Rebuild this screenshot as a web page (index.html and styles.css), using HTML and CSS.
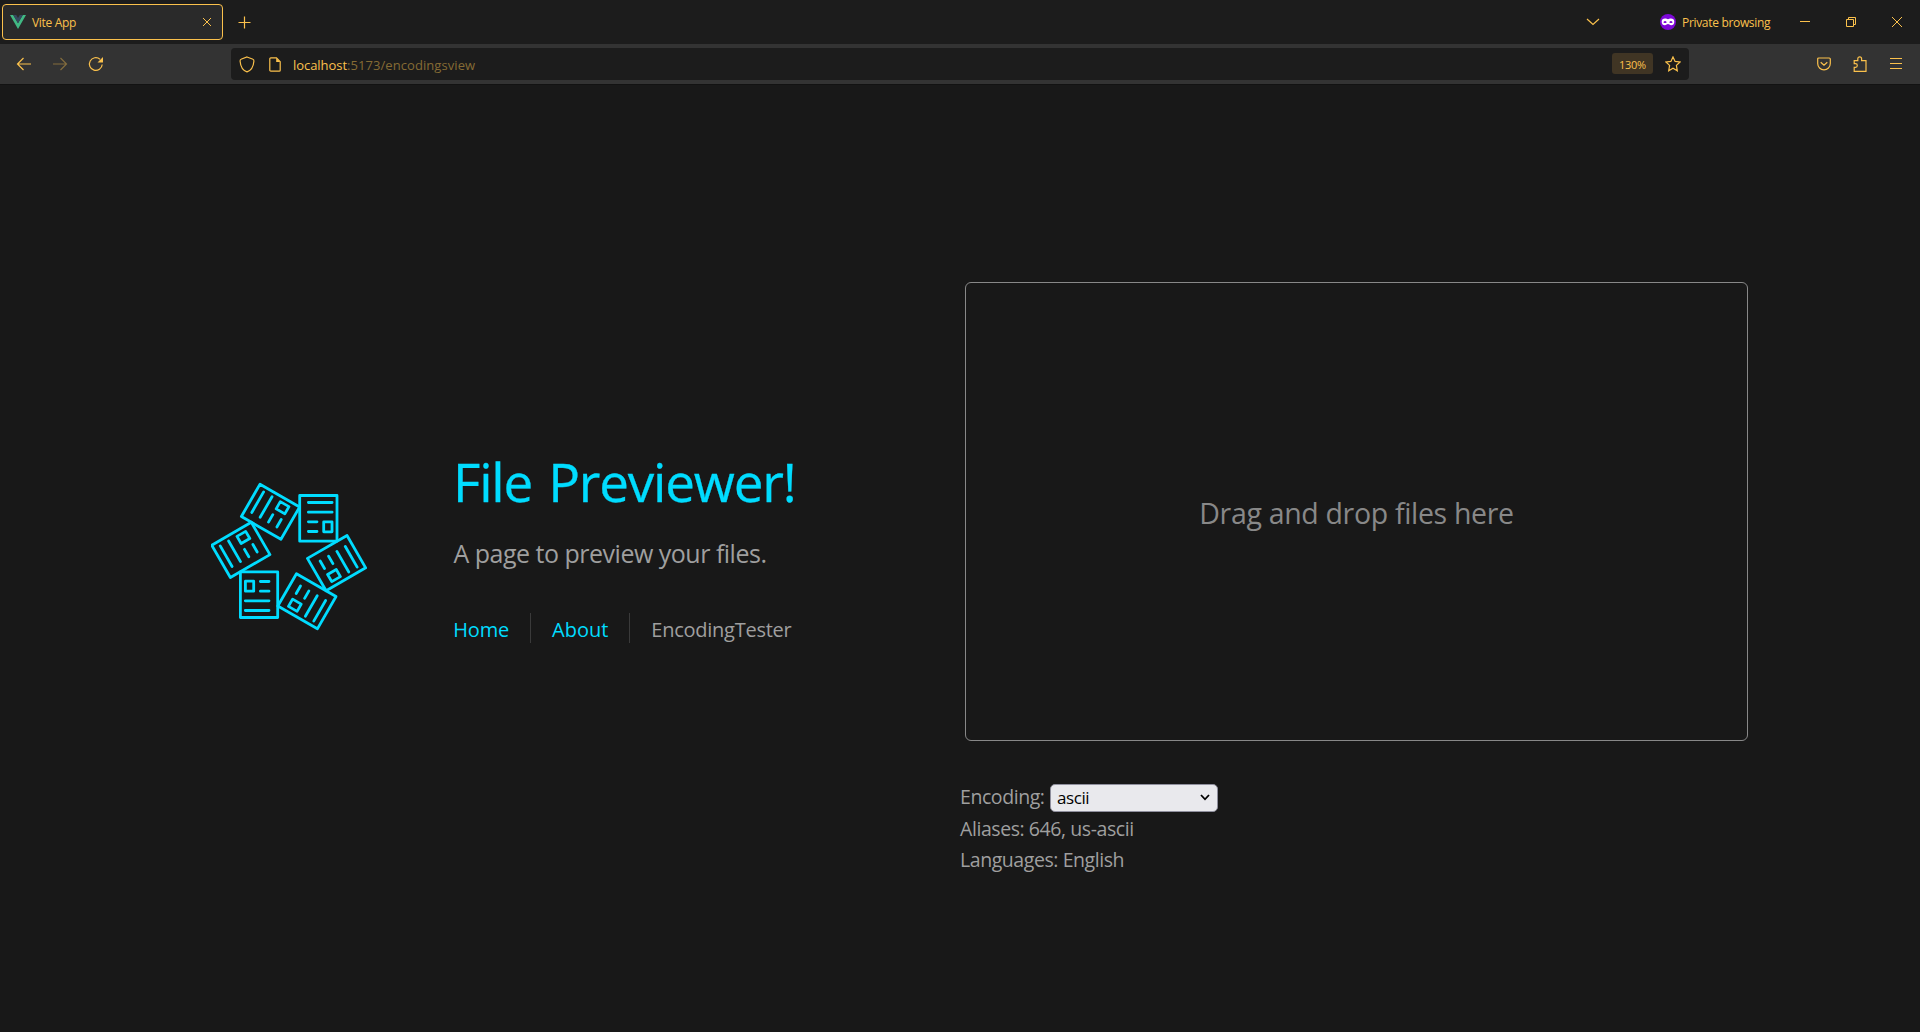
FILE: index.html
```html
<!DOCTYPE html>
<html lang="en">
<head>
<meta charset="utf-8">
<title>Vite App</title>
<link rel="stylesheet" href="styles.css">
</head>
<body>
<header class="tabbar">
  <div class="tab">
    <svg class="favicon" width="16" height="14" viewBox="0 0 16 14"><path fill="#41b883" d="M0 0h3.2L8 8.300 12.800 0H16L8 14z"/><path fill="#35495e" d="M3.200 0H6.200L8 3.100 9.800 0h3L8 8.300z"/></svg>
    <span class="tab-title">Vite App</span>
    <svg class="tab-close" width="10" height="10" viewBox="0 0 10 10"><path d="M1 1l8 8M9 1L1 9"/></svg>
  </div>
  <svg class="new-tab" width="13" height="13" viewBox="0 0 13 13"><path d="M6.500 .5v12M.5 6.500h12"/></svg>
  <div class="window-tools">
    <svg class="list-tabs" width="14" height="8" viewBox="0 0 14 8"><path d="M1 1l6 5.500L13 1"/></svg>
    <svg class="mask" width="16" height="16" viewBox="0 0 16 16"><circle cx="8" cy="8" r="8" fill="#7d08d8" stroke="none"/><path fill="#fff" stroke="none" d="M5 4.500C6.500 4.500 7 5.200 8 5.200S9.500 4.500 11 4.500c2 0 3.300 1 3.300 3.200 0 2.300-1.400 3.600-3.100 3.600-1.600 0-2.100-1.200-3.200-1.200s-1.600 1.200-3.200 1.200c-1.700 0-3.100-1.300-3.100-3.600C1.700 5.500 3 4.500 5 4.500z"/><path fill="#7d08d8" stroke="none" d="M3.300 8.200q1.800-2.400 3.500 0-1.800 1.800-3.500 0zM9.200 8.200q1.700-2.400 3.500 0-1.700 1.800-3.500 0z"/></svg>
    <span class="private">Private browsing</span>
    <svg class="minimize" width="10" height="10" viewBox="0 0 10 10"><path d="M0 4.500h10"/></svg>
    <svg class="restore" width="10" height="10" viewBox="0 0 10 10"><path d="M.5 2.500h7v7h-7zM2.500 2.500v-2h7v7h-2"/></svg>
    <svg class="close" width="10" height="10" viewBox="0 0 10 10"><path d="M0 0l10 10M10 0L0 10"/></svg>
  </div>
</header>
<nav class="toolbar">
  <svg class="back" width="16" height="14" viewBox="0 0 16 14"><path d="M15 7H1.500M7.500 1l-6 6 6 6"/></svg>
  <svg class="forward" width="16" height="14" viewBox="0 0 16 14"><path d="M1 7h13.500M8.500 1l6 6-6 6"/></svg>
  <svg class="reload" width="16" height="16" viewBox="0 0 16 16"><path d="M14.200 8.500A6.400 6.400 0 1 1 12 3.200"/><path class="solid" d="M15 1v5.500H9.500z"/></svg>
  <div class="urlbar">
    <svg class="shield" width="16" height="17" viewBox="0 0 16 17"><path d="M8 1l6 2.200c.9.300 1 .9.900 2C14.500 10 12 14.500 8 15.900 4 14.500 1.500 10 1.100 5.200 1 4.100 1.100 3.500 2 3.200z"/></svg>
    <svg class="doc" width="12" height="15" viewBox="0 0 12 15"><path d="M2 .8h5.500l3.700 4v8.400a1 1 0 0 1-1 1H1.800a1 1 0 0 1-1-1V1.800a1 1 0 0 1 1-1z"/><path class="solid" d="M7.200 1v4h4z"/></svg>
    <span class="url"><span class="host">localhost</span>:5173/encodingsview</span>
    <span class="zoom">130%</span>
    <svg class="star" width="16" height="16" viewBox="0 0 16 16"><path d="M8 .9l2.100 4.500 4.900.6-3.600 3.400.9 5.400L8 12.300l-4.300 2.500.9-5.400L1 6l4.900-.6z"/></svg>
  </div>
  <svg class="pocket" width="14" height="14" viewBox="0 0 14 14"><path d="M1.700 1h10.600q1 0 1 1v4.500a6.300 6.300 0 0 1-12.600 0V2q0-1 1-1zM3.700 5.200L7 8.300l3.300-3.100"/></svg>
  <svg class="puzzle" width="14" height="16" viewBox="0 0 14 16"><path d="M1.200 15.300v-4h1.300a1.800 1.800 0 0 0 0-3.600H1.200V4.600h3.600V2.700a1.900 1.900 0 0 1 3.800 0v1.900H13v10.700z"/></svg>
  <svg class="menu" width="12" height="11" viewBox="0 0 12 11"><path d="M0 .5h12M0 5.500h12M0 10.500h12"/></svg>
</nav>
<main class="page">
  <section class="intro">
    <svg class="logo" width="156" height="150" viewBox="-77.700 -75.500 156 150">
      <defs><g id="sheet"><path d="M-48.300 15.300h37.300V61h-37.300zM-43.300 24.700h8.300v10h-8.300zM-28.300 25h8.600M-28.300 34.700h8.600M-43.400 44.300h23.700M-43.400 54h23.700"/></g></defs>
      <use href="#sheet"/>
      <use href="#sheet" transform="rotate(60)"/>
      <use href="#sheet" transform="rotate(120)"/>
      <use href="#sheet" transform="rotate(180)"/>
      <use href="#sheet" transform="rotate(240)"/>
      <use href="#sheet" transform="rotate(300)"/>
    </svg>
    <div class="greeting">
      <h1>File Previewer!</h1>
      <p class="tagline">A page to preview your files.</p>
      <div class="links"><a>Home</a><a>About</a><a class="current">EncodingTester</a></div>
    </div>
  </section>
  <section class="tester">
    <div class="drop">Drag and drop files here</div>
    <div class="details">
      <div class="row"><span class="label">Encoding:</span><div class="select"><span>ascii</span><svg width="10" height="7" viewBox="0 0 10 7"><path d="M1 1l4 4.300L9 1"/></svg></div></div>
      <div class="row">Aliases: 646, us-ascii</div>
      <div class="row">Languages: English</div>
    </div>
  </section>
</main>
</body>
</html>
```
FILE: styles.css
```css
* { box-sizing: border-box; }
body {
  margin: 0;
  height: 1032px;
  overflow: hidden;
  background: #181818;
  font-family: "Open Sans", "Noto Sans", sans-serif;
}
svg { display: block; flex: none; fill: none; stroke: #fbc14c; stroke-width: 1.2; }
.solid { fill: #fbc14c; stroke: none; }
.tabbar { display: flex; align-items: center; height: 44px; padding-left: 2px; background: #1c1c1c; color: #fbc14c; font-size: 12px; line-height: 16px; letter-spacing: -.32px; white-space: nowrap; }
.tab { display: flex; align-items: center; width: 221px; height: 36px; padding: 0 10px 0 7px; border: 1px solid #fbc14c; border-radius: 4px; background: #2a2a2a; }
.favicon { stroke: none; }
.tab-title { margin-left: 6px; padding-top: 2px; flex: 1; }
.tab-close { stroke-width: 1; }
.new-tab { margin-left: 15px; margin-top: 1px; }
.window-tools { display: flex; align-items: center; margin-left: auto; padding-right: 18px; }
.list-tabs { margin-right: 60px; }
.mask { margin-right: 6px; }
.private { width: 118px; padding-top: 2px; }
.minimize, .restore, .close { stroke-width: 1; }
.restore { margin: 0 36px; }
.toolbar { display: flex; align-items: center; height: 41px; padding: 0 18px 1px 16px; background: #333; border-bottom: 1px solid #121212; }
.back, .forward, .reload, .shield, .doc { position: relative; top: .5px; }
.forward { margin-left: 20px; opacity: .4; }
.reload { margin-left: 20px; }
.urlbar { display: flex; align-items: center; width: 1458px; height: 32px; margin-left: 127px; padding: 0 8px; border-radius: 4px; background: #1c1c1c; }
.doc { margin-left: 14px; }
.url { margin-left: 12px; padding-top: 2px; color: #856b34; font-size: 13px; line-height: 18px; letter-spacing: .07px; }
.host { color: #fbc14c; letter-spacing: -.05px; }
.zoom { margin-left: auto; width: 41px; height: 21px; border-radius: 3px; background: #403524; color: #fbc14c; font-size: 11px; line-height: 23px; letter-spacing: -.3px; text-align: center; }
.star { margin-left: 12px; }
.pocket { margin-left: 128px; }
.puzzle { margin-left: 22px; }
.menu { margin-left: 23px; }
.page { display: grid; grid-template-columns: 749px 1fr; height: 947px; padding: 0 171px 0 211px; }
.intro { display: flex; align-items: flex-start; padding-top: 358px; }
.logo { margin: 38px 87px 0 0; stroke: #00dcff; stroke-width: 2.8; stroke-linecap: round; stroke-linejoin: round; }
.greeting { color: #9f9f9f; white-space: nowrap; }
.greeting h1 { margin: 0 0 0 -1px; color: #00dcff; font-size: 53px; font-weight: 400; line-height: 78px; letter-spacing: -1.2px; word-spacing: 3.500px; -webkit-text-stroke: .3px #00dcff; }
.tagline { margin: 12px 0 0 -.5px; font-size: 25px; line-height: 40px; letter-spacing: -.5px; }
.links { display: flex; margin-top: 40px; }
.links a { height: 30px; padding: 0 21px; border-left: 1px solid #3a3a3a; color: #00dcff; font-size: 20px; line-height: 33px; }
.links a:first-child { width: 76px; padding-left: 0; border: 0; letter-spacing: -.2px; text-indent: -.7px; }
.links .current { color: #9f9f9f; letter-spacing: -.25px; }
.tester { padding-top: 197px; }
.drop { display: flex; align-items: center; justify-content: center; width: 783px; height: 459px; margin-left: 5px; padding-top: 3px; border: 1px solid #888; border-radius: 6px; color: #888; font-size: 28.500px; letter-spacing: -.33px; }
.details { padding-top: 41px; color: #9f9f9f; font-size: 19.500px; line-height: 29px; letter-spacing: -.43px; }
.row { display: flex; align-items: center; height: 31.400px; padding-bottom: 2px; white-space: nowrap; }
.label { width: 90px; }
.select { display: flex; align-items: center; justify-content: space-between; position: relative; top: 1px; width: 168px; height: 28px; padding: 0 7px 0 6px; border: 1px solid #8f8f9d; border-radius: 5px; background: #e9e9ed; color: #000; font-size: 17px; line-height: 24px; }
.select svg { stroke: #000; stroke-width: 1.800; }
```
